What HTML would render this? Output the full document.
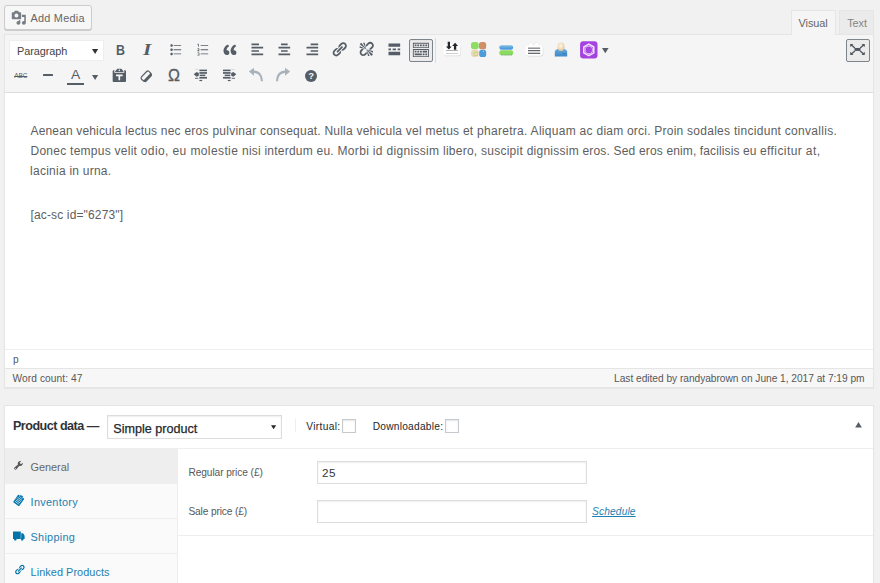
<!DOCTYPE html>
<html lang="en">
<head>
<meta charset="utf-8">
<title>Edit product</title>
<style>
*{box-sizing:border-box;margin:0;padding:0}
html,body{width:880px;height:583px;overflow:hidden;background:#f1f1f1}
body{position:relative;font-family:"Liberation Sans",sans-serif;color:#444;font-size:13px}
.abs{position:absolute}
.t{position:absolute;white-space:pre;line-height:1;transform-origin:0 0}
#addmedia{left:4px;top:5px;width:88px;height:25px;border:1px solid #ccc;border-radius:3px;background:#f7f7f7;box-shadow:0 1px 0 #ccc}
#tabv{left:791px;top:10px;width:45px;height:25px;background:#f5f5f5;border:1px solid #e5e5e5;border-bottom:none}
#tabt{left:839px;top:10px;width:35px;height:24px;background:#ebebeb;border:1px solid #e5e5e5;border-bottom:none}
#editor{left:4px;top:34px;width:870px;height:354px;border:1px solid #e5e5e5;background:#fff;box-shadow:0 1px 1px rgba(0,0,0,.04)}
#toolbar{left:0;top:0;width:868px;height:58px;background:#f5f5f5;border-bottom:1px solid #ddd}
#parasel{left:9px;top:40px;width:95px;height:21px;background:#fff;border:1px solid #eee}
#ksink{left:409px;top:39px;width:24px;height:23px;border:1px solid #7e848b;border-radius:2px;background:#ebebeb;box-shadow:inset 0 1px 1px -1px rgba(0,0,0,.3)}
#fsbtn{left:846px;top:39px;width:24px;height:23px;border:1px solid #7e848b;border-radius:2px;background:#ebebeb}
#sep1{left:435px;top:38px;width:1px;height:25px;background:#ddd}
#pathbar{left:5px;top:349px;width:868px;height:19px;border-top:1px solid #eee;background:#fff}
#status{left:5px;top:368px;width:868px;height:19px;border-top:1px solid #e5e5e5;background:#f7f7f7}
#pbox{left:4px;top:405px;width:870px;height:200px;border:1px solid #e5e5e5;background:#fff;box-shadow:0 1px 1px rgba(0,0,0,.04)}
#phead{left:5px;top:448px;width:868px;height:1px;background:#eee}
#ptabs{left:5px;top:449px;width:173px;height:140px;background:#fafafa;border-right:1px solid #eee}
#tabgen{left:5px;top:449px;width:173px;height:35px;background:#eee;border-bottom:1px solid #eee}
.tabline{left:5px;width:172px;height:1px;background:#eee}
#psel{left:107px;top:415px;width:175px;height:24px;border:1px solid #ddd;background:#fff;box-shadow:inset 0 1px 2px rgba(0,0,0,.07)}
.cb{width:14px;height:14px;border:1px solid #c6cace;background:#fff;box-shadow:inset 0 1px 2px rgba(0,0,0,.1)}
.inp{left:317px;width:270px;height:23px;border:1px solid #ddd;background:#fff;box-shadow:inset 0 1px 2px rgba(0,0,0,.07)}
#optline{left:178px;top:535px;width:695px;height:1px;background:#eee}
#vsep{left:295px;top:419px;width:1px;height:13px;background:#eee}
svg{position:absolute;overflow:visible}
</style>
</head>
<body>
<!-- Add Media button -->
<div id="addmedia" class="abs"></div>

<!-- editor tabs -->
<div id="tabt" class="abs"></div>
<div id="editor" class="abs"><div id="toolbar" class="abs"></div></div>
<div id="tabv" class="abs"></div>

<!-- toolbar -->
<div id="parasel" class="abs"></div>
<div id="ksink" class="abs"></div>
<div id="sep1" class="abs"></div>
<div id="fsbtn" class="abs"></div>

<!-- content -->

<div id="pathbar" class="abs"></div>
<div id="status" class="abs"></div>

<!-- product data -->
<div id="pbox" class="abs"></div>
<div id="psel" class="abs"></div>
<div id="vsep" class="abs"></div>
<div class="abs cb" style="left:342px;top:419px"></div>
<div class="abs cb" style="left:445px;top:419px"></div>

<div id="phead" class="abs"></div>
<div id="ptabs" class="abs"></div>
<div id="tabgen" class="abs"></div>
<div class="abs tabline" style="top:518px"></div>
<div class="abs tabline" style="top:553px"></div>

<div class="abs inp" style="top:461px"></div>
<div class="abs inp" style="top:500px"></div>
<div id="optline" class="abs"></div>
<!--ICONS-->
<svg style="left:10.60px;top:9.80px" width="15.6" height="15.6" viewBox="0 0 20 20" fill="#787c83" ><path d="M13 11V4c0-.55-.45-1-1-1h-1.670L9 1H5L3.670 3H2c-.55 0-1 .45-1 1v7c0 .55.450 1 1 1h10c.55 0 1-.45 1-1zM7 4.500c1.380 0 2.500 1.120 2.500 2.500S8.380 9.500 7 9.500 4.500 8.380 4.500 7 5.620 4.500 7 4.500zM14 6h5v10.500c0 1.380-1.120 2.500-2.500 2.500S14 17.880 14 16.500s1.120-2.500 2.500-2.500c.17 0 .34.020.5.050V9h-3V6zm-4 8.050V13h2v3.500c0 1.380-1.120 2.500-2.500 2.500S7 17.880 7 16.500 8.120 14 9.500 14c.17 0 .34.020.5.050z"/></svg>
<svg style="left:91.9px;top:48.7px" width="6.2" height="5" viewBox="0 0 10 8" fill="#333"><path d="M0 0h10L5 8z"/></svg>
<svg style="left:166.97px;top:40.87px" width="16.67" height="16.67" viewBox="0 0 20 20" fill="#555d66" ><path d="M5.5 7C4.670 7 4 6.330 4 5.500 4 4.680 4.670 4 5.500 4 6.320 4 7 4.680 7 5.500 7 6.330 6.320 7 5.500 7zM8 5h9v1H8V5zm-2.500 7c-.83 0-1.500-.67-1.500-1.500C4 9.680 4.670 9 5.500 9c.82 0 1.500.68 1.500 1.500 0 .83-.68 1.500-1.500 1.500zM8 10h9v1H8v-1zm-2.500 7c-.83 0-1.500-.67-1.500-1.500 0-.82.67-1.500 1.500-1.500.82 0 1.500.68 1.500 1.500 0 .83-.68 1.500-1.500 1.500zM8 15h9v1H8v-1z"/></svg>
<svg style="left:194.26px;top:40.87px" width="16.67" height="16.67" viewBox="0 0 20 20" fill="#555d66" ><path d="M8 5h9v1H8zM8 10h9v1H8zM8 15h9v1H8z"/><path d="M4.6 3.2h1.1v3.6h-.9V4.3l-.6.3-.3-.7zM3.9 9.300c.3-.4.8-.6 1.300-.6.700 0 1.300.4 1.300 1.100 0 .5-.3.900-1.200 1.700h1.300v.800H3.900v-.7c1.200-1.100 1.600-1.500 1.600-1.800 0-.2-.1-.3-.4-.3-.2 0-.5.100-.7.400zM4 14.200c.3-.3.800-.5 1.300-.5.800 0 1.300.4 1.300 1 0 .4-.2.700-.6.800.5.100.7.500.7.900 0 .700-.6 1.100-1.500 1.100-.5 0-1-.1-1.300-.4l.3-.7c.3.2.6.300 1 .3.400 0 .6-.1.600-.4s-.2-.4-.7-.4h-.4v-.7h.4c.4 0 .6-.1.600-.4 0-.2-.2-.3-.5-.3s-.6.100-.8.300z"/></svg>
<svg style="left:221.10px;top:41.00px" width="17.6" height="17.6" viewBox="0 0 20 20" fill="#555d66" ><path d="M9.490 13.220c0-.74-.2-1.380-.61-1.900-.62-.78-1.830-.88-2.530-.72-.29-1.650 1.110-3.750 2.920-4.650L7.880 4c-2.730 1.300-5.420 4.280-4.960 8.050C3.210 14.430 4.590 16 6.540 16c.85 0 1.560-.25 2.120-.75s.83-1.180.83-2.030zm8.050 0c0-.74-.2-1.380-.61-1.900-.63-.78-1.830-.88-2.530-.72-.29-1.650 1.110-3.750 2.920-4.650L15.930 4c-2.730 1.300-5.410 4.280-4.950 8.050.29 2.380 1.660 3.950 3.610 3.950.85 0 1.560-.25 2.120-.75s.83-1.180.83-2.030z"/></svg>
<svg style="left:248.56px;top:41.27px" width="16.67" height="16.67" viewBox="0 0 20 20" fill="#555d66" ><path d="M12 5V3H3v2h9zm5 4V7H3v2h14zm-5 4v-2H3v2h9zm5 4v-2H3v2h14z"/></svg>
<svg style="left:275.97px;top:41.27px" width="16.67" height="16.67" viewBox="0 0 20 20" fill="#555d66" ><path d="M14 5V3H6v2h8zm3 4V7H3v2h14zm-3 4v-2H6v2h8zm3 4v-2H3v2h14z"/></svg>
<svg style="left:303.56px;top:41.27px" width="16.67" height="16.67" viewBox="0 0 20 20" fill="#555d66" ><path d="M17 5V3H8v2h9zm0 4V7H3v2h14zm0 4v-2H8v2h9zm0 4v-2H3v2h14z"/></svg>
<svg style="left:331.06px;top:41.16px" width="16.67" height="16.67" viewBox="0 0 20 20" fill="#555d66" ><path d="M17.740 2.760c1.680 1.690 1.680 4.410 0 6.100l-1.530 1.520c-1.120 1.120-2.700 1.470-4.140 1.090l2.620-2.610.76-.77.760-.76c.84-.84.84-2.200 0-3.040-.84-.85-2.200-.85-3.040 0l-.77.760-3.380 3.380c-.37-1.440-.02-3.020 1.100-4.140l1.520-1.530c1.690-1.680 4.420-1.680 6.100 0zM8.590 13.430l5.340-5.340c.42-.42.42-1.100 0-1.520-.44-.43-1.130-.39-1.530 0l-5.330 5.340c-.42.42-.42 1.100 0 1.520.44.430 1.130.39 1.520 0zm-.76 2.290l4.140-4.150c.38 1.440.03 3.020-1.090 4.140l-1.520 1.530c-1.690 1.680-4.410 1.680-6.100 0-1.680-1.680-1.680-4.420 0-6.100l1.530-1.520c1.120-1.120 2.700-1.470 4.140-1.100l-4.140 4.150c-.85.840-.85 2.200 0 3.050.84.840 2.200.840 3.040 0z"/></svg>
<svg style="left:358.27px;top:41.27px" width="16.67" height="16.67" viewBox="0 0 20 20" fill="#555d66" ><path d="M17.740 2.260c1.680 1.690 1.680 4.410 0 6.100l-1.530 1.520c-.32.33-.69.58-1.080.77L13 10l1.690-1.640.76-.77.760-.76c.84-.84.84-2.200 0-3.040-.84-.85-2.200-.85-3.040 0l-.77.760-.76.760L10 7l-.65-2.140c.19-.38.440-.75.770-1.070l1.520-1.530c1.690-1.680 4.420-1.680 6.100 0zM2 4l8 6-6-8zm4-2l4 8-2-8H6zM2 6l8 4-8-2V6zm7.360 7.690L10 13l.74 2.350-1.380 1.390c-1.690 1.680-4.410 1.680-6.100 0-1.680-1.680-1.680-4.420 0-6.100l1.390-1.380L7 10l-.69.640-1.520 1.530c-.85.840-.85 2.200 0 3.040.84.850 2.200.85 3.040 0zM18 16l-8-6 6 8zm-4 2l-4-8 2 8h2zm4-4l-8-4 8 2v2z"/></svg>
<svg style="left:385.77px;top:41.37px" width="16.67" height="16.67" viewBox="0 0 20 20" fill="#555d66" ><path d="M17 7V3H3v4h14zM6 11V9H3v2h3zm6 0V9H8v2h4zm5 0V9h-3v2h3zm0 6v-4H3v4h14z"/></svg>
<svg style="left:412.10px;top:40.50px" width="17.8" height="17.8" viewBox="0 0 20 20" fill="#555d66" ><path d="M19 2v6H1V2h18zm-1 5V3H2v4h16zM5 4v2H3V4h2zm3 0v2H6V4h2zm3 0v2H9V4h2zm3 0v2h-2V4h2zm3 0v2h-2V4h2zm2 5v9H1V9h18zm-1 8v-7H2v7h16zM5 11v2H3v-2h2zm3 0v2H6v-2h2zm3 0v2H9v-2h2zm6 0v2h-5v-2h5zm-6 3v2H3v-2h8zm3 0v2h-2v-2h2zm3 0v2h-2v-2h2z"/></svg>
<svg style="left:443px;top:41px" width="19" height="17" viewBox="0 0 19 17"><rect x=".9" y="3.500" width="17" height="11.700" rx="2.600" fill="#d9d9d9"/><rect x=".5" y="2.900" width="17" height="11.500" rx="2.600" fill="#fff"/><path d="M4.700 .8h2.300v4.600h1.800L5.850 8.600 2.900 5.400h1.800zM10.900 8.800h2.350V5h1.800L12.100 1.800 9.100 5h1.800z" fill="#26262b"/><rect x="2.900" y="9.200" width="12" height=".8" fill="#9a9a9a"/><rect x="2.900" y="12" width="12" height=".8" fill="#c4c4c4"/></svg>
<svg style="left:471px;top:42px" width="16" height="16" viewBox="0 0 16 16"><rect x="0" y=".1" width="7.700" height="7.200" rx="2.800" fill="#8fdc63"/><rect x="8" y=".1" width="7.200" height="7.200" rx="2.600" fill="#d08f66"/><rect x="0" y="7.800" width="7.700" height="7.200" rx="2.400" fill="#efd7b6"/><rect x="3" y="10.100" width="3.400" height="3.400" fill="none" stroke="#8fdc63" stroke-width=".9" stroke-dasharray=".9 .8"/><rect x="8.200" y="7.800" width="7" height="7.200" rx="2.600" fill="#4d9bd8"/><rect x="12" y="8.800" width="1" height="1" fill="#b5d6f0"/></svg>
<svg style="left:498.5px;top:44.5px" width="15" height="11" viewBox="0 0 15 11"><rect x=".4" y=".5" width="13.700" height="4.200" rx="2" fill="#4f9ddb"/><rect x=".4" y="1" width="13" height="1.600" rx=".8" fill="#6fb0e2"/><rect x=".4" y="5.300" width="13.700" height="5" rx="2" fill="#8bdc5e"/><rect x="2" y="9.500" width="11" height=".8" fill="#6b8" opacity=".5" /><path d="M2.500 9.900h.9M5.700 9.900h.9M8.900 9.900h.9M12 9.900h.9" stroke="#b06a6a" stroke-width=".8" opacity=".6"/></svg>
<svg style="left:525px;top:42px" width="19" height="15" viewBox="0 0 19 15"><rect x="1.200" y="4" width="17.200" height="10.400" rx="2.400" fill="#dadada"/><rect x="3.600" y=".5" width="3.900" height="4.500" rx="1.400" fill="#fff" stroke="#e0e0e0" stroke-width=".4"/><rect x="9.800" y=".5" width="3.900" height="4.500" rx="1.400" fill="#fff" stroke="#e0e0e0" stroke-width=".4"/><rect x=".6" y="3.400" width="17.200" height="10.300" rx="2.400" fill="#fff"/><rect x="3" y="5.500" width="12.200" height="1.400" fill="#8a8a8e"/><rect x="3" y="8.100" width="12.200" height="1.100" fill="#4d5058"/><rect x="3" y="10.700" width="12.200" height="1.300" fill="#6a6c72"/></svg>
<svg style="left:553.7px;top:41.5px" width="15" height="15.5" viewBox="0 0 15 15.5"><defs><radialGradient id="hd" cx=".45" cy=".4" r=".6"><stop offset="0" stop-color="#fff8ea"/><stop offset=".6" stop-color="#f1dcbc"/><stop offset="1" stop-color="#dfc096"/></radialGradient><linearGradient id="bd" x1="0" y1="0" x2="0" y2="1"><stop offset="0" stop-color="#62a8de"/><stop offset="1" stop-color="#3f88c6"/></linearGradient></defs><path d="M.8 14.600V10c0-1.500 1.200-2.700 3-3h6.400c1.800.3 3 1.500 3 3v4.600z" fill="url(#bd)"/><ellipse cx="7" cy="4.700" rx="3.500" ry="4.300" fill="url(#hd)"/><rect x="8.400" y="11.300" width="3.400" height=".9" fill="#3573ad"/></svg>
<svg style="left:580px;top:41.3px" width="18" height="18" viewBox="0 0 18 18"><rect x=".1" y=".3" width="17.400" height="17.200" rx="3.200" fill="#a543e0"/><path d="M8.800 3.100l5 2.900v5.800l-5 2.900-5-2.900V6z" fill="none" stroke="#f3e4fb" stroke-width="1.500" stroke-linejoin="round"/><circle cx="8.800" cy="8.900" r="3.700" fill="none" stroke="#d9aef3" stroke-width="1.100"/><circle cx="8.800" cy="8.900" r="2.300" fill="#a846e2"/></svg>
<svg style="left:602.1px;top:48.2px" width="6.600" height="5.300" viewBox="0 0 10 8" fill="#555d66"><path d="M0 0h10L5 8z"/></svg>
<svg style="left:849px;top:43px" width="17" height="13" viewBox="0 0 17 13" fill="#50565f"><rect x="5.500" y="5" width="6" height="2.900"/><path d="M1.200 1h3.300L3.400 2l2.900 2.400-.9 1.100L2.500 3 1.200 4.100z"/><g transform="translate(17 0) scale(-1 1)"><path d="M1.200 1h3.300L3.400 2l2.900 2.400-.9 1.100L2.500 3 1.200 4.100z"/></g><g transform="translate(0 12.900) scale(1 -1)"><path d="M1.200 1h3.300L3.400 2l2.900 2.400-.9 1.100L2.500 3 1.200 4.100z"/></g><g transform="translate(17 12.900) scale(-1 -1)"><path d="M1.200 1h3.300L3.400 2l2.900 2.400-.9 1.100L2.500 3 1.200 4.100z"/></g></svg>
<div class="abs" style="left:43px;top:74.200px;width:10.200px;height:2.300px;background:#555d66;border-radius:.5px"></div>
<div class="abs" style="left:67.200px;top:83px;width:16.500px;height:1.900px;background:#555d66"></div>
<svg style="left:91.900px;top:74.600px" width="6.200" height="5" viewBox="0 0 10 8" fill="#555d66"><path d="M0 0h10L5 8z"/></svg>
<svg style="left:110.87px;top:67.26px" width="16.67" height="16.67" viewBox="0 0 20 20" fill="#555d66" ><path d="M12.380 2L15 5v1H5V5l2.640-3h4.740zM10 5c.55 0 1-.44 1-1 0-.55-.45-1-1-1s-1 .45-1 1c0 .56.45 1 1 1zm5.450-1H17c.55 0 1 .45 1 1v12c0 .56-.45 1-1 1H3c-.55 0-1-.44-1-1V5c0-.55.45-1 1-1h1.550L4 4.630V7h12V4.630zM14 11V9H6v2h3v5h2v-5h3z"/></svg>
<svg style="left:137.86px;top:67.97px" width="16.67" height="16.67" viewBox="0 0 20 20" fill="#555d66" ><g transform="rotate(-47 10 10)"><rect x="3.600" y="6.300" width="12.800" height="6.600" rx="1.900" fill="none" stroke="#555d66" stroke-width="1.400"/><path d="M3.600 11h12.800v1.500c0 1.200-.8 2-2 2H5.600c-1.200 0-2-.8-2-2z"/></g></svg>
<svg style="left:193px;top:69px" width="15" height="13" viewBox="0 0 15 13" fill="#555d66"><rect x="6.400" y=".6" width="7.600" height="1.600"/><rect x="6.400" y="3.100" width="7.600" height="1.700"/><rect x="6.700" y="5.600" width="5.600" height="1.500"/><rect x="6.400" y="7.900" width="7.600" height="1.700"/><rect x="6.400" y="10.900" width="2.800" height="1.200"/><path d="M.7 5.300L3.600 2.900l2.200 1v2.800l-2.200 1z"/><rect x="2" y="8.800" width="3.400" height=".9"/><rect x="2.300" y=".2" width="3.200" height=".7" opacity=".25"/></svg>
<svg style="left:221.700px;top:69px" width="15" height="13" viewBox="0 0 15 13" fill="#555d66"><g transform="translate(15 0) scale(-1 1)"><rect x="6.400" y=".6" width="7.600" height="1.600"/><rect x="6.400" y="3.100" width="7.600" height="1.700"/><rect x="6.700" y="5.600" width="5.600" height="1.500"/><rect x="6.400" y="7.900" width="7.600" height="1.700"/><rect x="6.400" y="10.900" width="2.800" height="1.200"/><path d="M.7 5.300L3.600 2.900l2.200 1v2.800l-2.200 1z"/><rect x="2" y="8.800" width="3.400" height=".9"/><rect x="2.300" y=".2" width="3.200" height=".7" opacity=".25"/></g></svg>
<svg style="left:248.30px;top:66.20px" width="18" height="18" viewBox="0 0 20 20" fill="#a9b1ba" ><path d="M1 6.200L6.600 2v2.900c6 .2 9.700 4.200 10 12.100h-2.300c-.2-5.700-2.700-8.800-7.700-9.100v2.800z"/></svg>
<svg style="left:273.20px;top:66.20px" width="18" height="18" viewBox="0 0 20 20" fill="#a9b1ba" ><g transform="translate(20 0) scale(-1 1)"><path d="M1 6.200L6.600 2v2.900c6 .2 9.700 4.200 10 12.100h-2.300c-.2-5.700-2.700-8.800-7.700-9.100v2.800z"/></g></svg>
<div class="abs" style="left:304.800px;top:69.500px;width:12px;height:12px;border-radius:6px;background:#555d66"></div>
<svg style="left:854.700px;top:421.600px" width="7" height="5.400" viewBox="0 0 10 8" fill="#555d66"><path d="M0 8h10L5 0z"/></svg>
<svg style="left:270.600px;top:425px" width="5.200" height="4.500" viewBox="0 0 10 8" fill="#23282d"><path d="M0 0h10L5 8z"/></svg>
<svg style="left:13.20px;top:460.10px" width="10.8" height="10.8" viewBox="0 0 20 20" fill="#555" ><path d="M16.680 9.770c-1.340 1.340-3.300 1.670-4.950.99l-5.410 6.520c-.99.990-2.590.990-3.580 0s-.99-2.590 0-3.570l6.520-5.420c-.68-1.650-.35-3.610.99-4.950 1.280-1.280 3.120-1.620 4.720-1.060l-2.890 2.890 2.820 2.820 2.860-2.890c.53 1.600.180 3.410-1.080 4.670zm-13.200 6.780c.39.390 1.030.390 1.420 0s.39-1.020 0-1.410-1.030-.39-1.420 0-.39 1.020 0 1.410z"/></svg>
<svg style="left:13.2px;top:494px" width="12" height="12" viewBox="0 0 12 12"><g transform="rotate(35 6 6)"><rect x="2.300" y="1.800" width="7.400" height="9.400" rx=".8" fill="#0073aa"/><rect x="4.200" y=".6" width="3.600" height="2.400" rx=".6" fill="#0073aa" stroke="#fafafa" stroke-width=".5"/><path d="M3.300 4.600h5.400M3.300 6.200h5.400M3.300 7.800h5.400M3.300 9.400h5.400" stroke="#d4e6f0" stroke-width=".75"/></g></svg>
<svg style="left:13px;top:530.5px" width="12" height="10.5" viewBox="0 0 12 10.5"><path d="M0 .5h7.800v7.500H0zM8.200 2.300h1.900l1.500 2.400v3.300H8.200z" fill="#0073aa"/><circle cx="2.300" cy="8.400" r="1.200" fill="#0073aa"/><circle cx="9.200" cy="8.400" r="1.200" fill="#0073aa"/></svg>
<svg style="left:13.60px;top:563.90px" width="11.2" height="11.2" viewBox="0 0 20 20" fill="#0073aa" ><path d="M17.740 2.760c1.680 1.690 1.680 4.410 0 6.100l-1.530 1.520c-1.120 1.120-2.700 1.470-4.140 1.090l2.620-2.610.76-.77.760-.76c.84-.84.84-2.200 0-3.040-.84-.85-2.200-.85-3.040 0l-.77.760-3.380 3.380c-.37-1.440-.02-3.020 1.100-4.140l1.520-1.530c1.690-1.680 4.420-1.680 6.100 0zM8.590 13.430l5.340-5.340c.42-.42.42-1.100 0-1.520-.44-.43-1.130-.39-1.530 0l-5.330 5.340c-.42.42-.42 1.100 0 1.520.44.430 1.130.39 1.520 0zm-.76 2.290l4.140-4.150c.38 1.440.03 3.020-1.090 4.140l-1.520 1.530c-1.690 1.680-4.410 1.680-6.100 0-1.680-1.680-1.680-4.420 0-6.100l1.530-1.520c1.120-1.120 2.700-1.470 4.140-1.100l-4.140 4.150c-.85.840-.85 2.200 0 3.050.84.840 2.200.840 3.040 0z"/></svg>
<!--/ICONS-->
<!--TEXT-->
<span class="t" id="t_addmedia" style="left:30.50px;top:13.07px;font-size:10.9px;letter-spacing:0.240px;color:#666">Add Media</span>
<span class="t" id="t_visual" style="left:798.50px;top:18.07px;font-size:10.9px;letter-spacing:-0.044px;color:#666">Visual</span>
<span class="t" id="t_text" style="left:847.25px;top:18.07px;font-size:10.9px;letter-spacing:-0.078px;color:#848484">Text</span>
<span class="t" id="t_para" style="left:17.00px;top:46.07px;font-size:10.9px;letter-spacing:-0.057px;color:#444">Paragraph</span>
<span class="t" id="t_l3" style="left:30.10px;top:165.14px;font-size:12px;letter-spacing:0.241px;color:#5e5e5e">lacinia in urna.</span>
<span class="t" id="t_l4" style="left:30.50px;top:209.14px;font-size:12px;letter-spacing:0.142px;color:#5e5e5e">[ac-sc id="6273"]</span>
<span class="t" id="t_p" style="left:12.90px;top:354.67px;font-size:10.2px;letter-spacing:0.000px;color:#585858">p</span>
<span class="t" id="t_wc" style="left:12.60px;top:373.67px;font-size:10.2px;letter-spacing:0.069px;color:#585858">Word count: 47</span>
<span class="t" id="t_le" style="left:614.10px;top:373.67px;font-size:10.2px;letter-spacing:-0.031px;color:#585858">Last edited by randyabrown on June 1, 2017 at 7:19 pm</span>
<span class="t" id="t_pd" style="left:13.00px;top:419.63px;font-size:12.6px;letter-spacing:-0.525px;font-weight:bold;color:#2e3338">Product data —</span>
<span class="t" id="t_sp" style="left:113.25px;top:422.63px;font-size:12.6px;letter-spacing:0.000px;color:#23282d;-webkit-text-stroke:.25px #23282d">Simple product</span>
<span class="t" id="t_virt" style="left:306.30px;top:421.67px;font-size:10.2px;letter-spacing:0.338px;color:#23282d">Virtual:</span>
<span class="t" id="t_down" style="left:372.70px;top:421.67px;font-size:10.2px;letter-spacing:0.241px;color:#23282d">Downloadable:</span>
<span class="t" id="t_gen" style="left:30.60px;top:462.07px;font-size:10.9px;letter-spacing:-0.042px;color:#666">General</span>
<span class="t" id="t_inv" style="left:30.60px;top:497.07px;font-size:10.9px;letter-spacing:0.288px;color:#1f7fb2">Inventory</span>
<span class="t" id="t_ship" style="left:30.60px;top:532.07px;font-size:10.9px;letter-spacing:0.258px;color:#1f7fb2">Shipping</span>
<span class="t" id="t_lp" style="left:30.60px;top:567.07px;font-size:10.9px;letter-spacing:0.056px;color:#1f7fb2">Linked Products</span>
<span class="t" id="t_rp" style="left:188.40px;top:467.67px;font-size:10.2px;letter-spacing:-0.086px;color:#585858">Regular price (£)</span>
<span class="t" id="t_spr" style="left:188.40px;top:506.67px;font-size:10.2px;letter-spacing:-0.146px;color:#585858">Sale price (£)</span>
<span class="t" id="t_25" style="left:321.90px;top:467.40px;font-size:11.7px;letter-spacing:0.584px;color:#32373c">25</span>
<span class="t" id="t_sch" style="left:592.10px;top:506.67px;font-size:10.2px;letter-spacing:0.131px;font-style:italic;color:#1f7fb2;text-decoration:underline">Schedule</span>
<span class="t" id="t_l1_0" style="left:30.50px;top:125.14px;font-size:12px;letter-spacing:0.152px;color:#5e5e5e">Aenean vehicula lectus </span>
<span class="t" id="t_l1_1" style="left:160.75px;top:125.14px;font-size:12px;letter-spacing:0.252px;color:#5e5e5e">nec eros pulvinar </span>
<span class="t" id="t_l1_2" style="left:260.00px;top:125.14px;font-size:12px;letter-spacing:0.218px;color:#5e5e5e">consequat. Nulla vehicula </span>
<span class="t" id="t_l1_3" style="left:405.75px;top:125.14px;font-size:12px;letter-spacing:0.248px;color:#5e5e5e">vel metus et </span>
<span class="t" id="t_l1_4" style="left:477.00px;top:125.14px;font-size:12px;letter-spacing:0.290px;color:#5e5e5e">pharetra. Aliquam ac </span>
<span class="t" id="t_l1_5" style="left:596.50px;top:125.14px;font-size:12px;letter-spacing:0.223px;color:#5e5e5e">diam orci. Proin </span>
<span class="t" id="t_l1_6" style="left:687.00px;top:125.14px;font-size:12px;letter-spacing:0.284px;color:#5e5e5e">sodales tincidunt convallis.</span>
<span class="t" id="t_l2_0" style="left:30.50px;top:145.14px;font-size:12px;letter-spacing:0.256px;color:#5e5e5e">Donec tempus velit </span>
<span class="t" id="t_l2_1" style="left:140.75px;top:145.14px;font-size:12px;letter-spacing:0.399px;color:#5e5e5e">odio, eu molestie </span>
<span class="t" id="t_l2_2" style="left:242.00px;top:145.14px;font-size:12px;letter-spacing:0.228px;color:#5e5e5e">nisi interdum eu. </span>
<span class="t" id="t_l2_3" style="left:337.50px;top:145.14px;font-size:12px;letter-spacing:0.322px;color:#5e5e5e">Morbi id dignissim </span>
<span class="t" id="t_l2_4" style="left:443.00px;top:145.14px;font-size:12px;letter-spacing:0.251px;color:#5e5e5e">libero, suscipit dignissim </span>
<span class="t" id="t_l2_5" style="left:582.50px;top:145.14px;font-size:12px;letter-spacing:0.175px;color:#5e5e5e">eros. Sed eros </span>
<span class="t" id="t_l2_6" style="left:666.50px;top:145.14px;font-size:12px;letter-spacing:0.112px;color:#5e5e5e">enim, facilisis eu </span>
<span class="t" id="t_l2_7" style="left:760.00px;top:145.14px;font-size:12px;letter-spacing:0.405px;color:#5e5e5e">efficitur at,</span>
<span class="t g" id="g_b" style="left:116.3px;top:41.8px;font-size:15.5px;font-weight:bold;color:#555d66;transform:scaleX(.8)">B</span>
<span class="t g" id="g_i" style="left:142.6px;top:41.7px;font-size:15.8px;font-weight:bold;font-style:italic;font-family:'Liberation Serif',serif;color:#555d66;transform:scaleX(1.35)">I</span>
<span class="t g" id="g_abc" style="left:14.2px;top:72.9px;font-size:6.4px;letter-spacing:0;color:#555d66;text-decoration:line-through">ABC</span>
<span class="t g" id="g_a" style="left:70.7px;top:69.2px;font-size:12.6px;color:#555d66;transform:scaleX(1.1)">A</span>
<span class="t g" id="g_om" style="left:167.9px;top:67.7px;font-size:16px;transform:scaleX(1.0);-webkit-text-stroke:.3px #555d66;color:#555d66">Ω</span>
<span class="t g" id="g_q" style="left:308.2px;top:71.2px;font-size:9.5px;font-weight:bold;color:#f5f5f5">?</span>
<!--/TEXT-->
</body>
</html>
